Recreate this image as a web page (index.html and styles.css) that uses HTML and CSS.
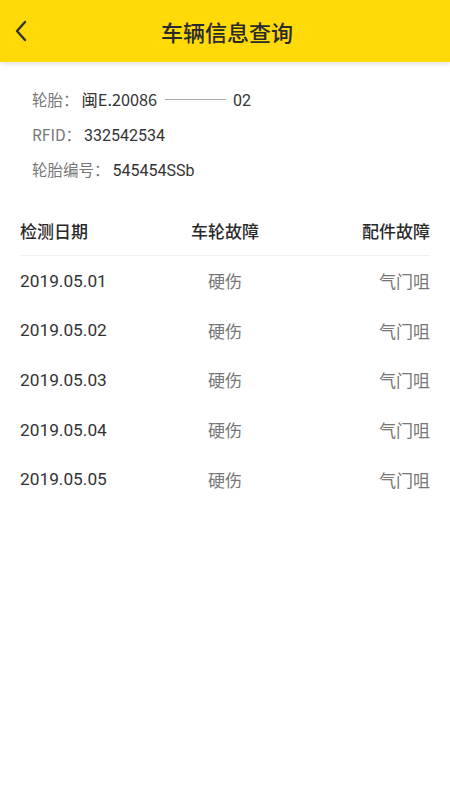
FILE: index.html
```html
<!DOCTYPE HTML>
<html>
  <head>
    <meta charset="UTF-8">
    <meta name="viewport" content="width=device-width, initial-scale=1">
    <link rel="stylesheet" href="styles.css">
  </head>
  <body>
    <div class="topbar">
      <div class="backbtn">
        <svg width="14" height="22" viewBox="0 0 14 22">
          <polyline points="11,2 3,11 11,20" fill="none" stroke="#333" stroke-width="2.4" stroke-linecap="round" stroke-linejoin="round"/>
        </svg>
      </div>
      <div class="title">车辆信息查询</div>
    </div>

    <div class="info">
      <p><span class="label">轮胎：</span><span class="val cn">闽E.20086</span><span class="dash"></span><span class="val">02</span></p>
      <p><span class="label">RFID：</span><span class="val">332542534</span></p>
      <p><span class="label">轮胎编号：</span><span class="val">545454SSb</span></p>
    </div>

    <div class="table">
      <div class="row head">
        <div class="c1">检测日期</div>
        <div class="c2">车轮故障</div>
        <div class="c3">配件故障</div>
      </div>
      <div class="row">
        <div class="c1">2019.05.01</div>
        <div class="c2">硬伤</div>
        <div class="c3">气门咀</div>
      </div>
      <div class="row">
        <div class="c1">2019.05.02</div>
        <div class="c2">硬伤</div>
        <div class="c3">气门咀</div>
      </div>
      <div class="row">
        <div class="c1">2019.05.03</div>
        <div class="c2">硬伤</div>
        <div class="c3">气门咀</div>
      </div>
      <div class="row">
        <div class="c1">2019.05.04</div>
        <div class="c2">硬伤</div>
        <div class="c3">气门咀</div>
      </div>
      <div class="row">
        <div class="c1">2019.05.05</div>
        <div class="c2">硬伤</div>
        <div class="c3">气门咀</div>
      </div>
    </div>
  </body>
</html>
```

FILE: styles.css
```css
body {
  margin: 0;
  background: #fff;
  font-family: "Noto Sans CJK SC", "Roboto", sans-serif;
  color: #333;
}
.topbar {
  height: 62px;
  background: #ffd908;
  box-shadow: 0 2px 5px rgba(0, 0, 0, 0.12);
  display: flex;
  align-items: center;
  justify-content: center;
  position: relative;
}
.backbtn {
  position: absolute;
  left: 14px;
  top: 20px;
  height: 22px;
}
.title {
  font-size: 22px;
  font-weight: 500;
  color: #2a2a2a;
  margin-left: 4px;
}
.info {
  padding: 20px 32px 0 32px;
}
.info p {
  margin: 0;
  height: 35px;
  line-height: 35px;
  display: flex;
  align-items: baseline;
}
.label {
  color: #777;
  font-size: 15.5px;
  margin-right: 3px;
}
.val {
  color: #333;
  font-family: "Roboto", "Noto Sans CJK SC", sans-serif;
  font-size: 16px;
}
.val.cn {
  font-family: "Noto Sans CJK SC", "Roboto", sans-serif;
  font-size: 16.3px;
}
.dash {
  width: 61px;
  height: 1px;
  background: #aaa;
  margin: 0 7px 0 8px;
  align-self: center;
}
.table {
  margin: 18px 20px 0 20px;
}
.row {
  display: grid;
  grid-template-columns: 1fr 1fr 1fr;
  height: 49.6px;
  align-items: center;
  font-size: 17px;
}
.row.head {
  height: 50px;
  border-bottom: 1px solid #f0f0f0;
  font-size: 17px;
  font-weight: 500;
  color: #2a2a2a;
}
.c1 {
  text-align: left;
}
.c2 {
  text-align: center;
}
.c3 {
  text-align: right;
}
.row .c1 {
  font-family: "Roboto", "Noto Sans CJK SC", sans-serif;
  font-size: 17.3px;
}
.row.head .c1 {
  font-family: "Noto Sans CJK SC", sans-serif;
  font-size: 17px;
}
.row .c2, .row .c3 {
  color: #777;
}
.row.head .c2, .row.head .c3 {
  color: #2a2a2a;
}
```
